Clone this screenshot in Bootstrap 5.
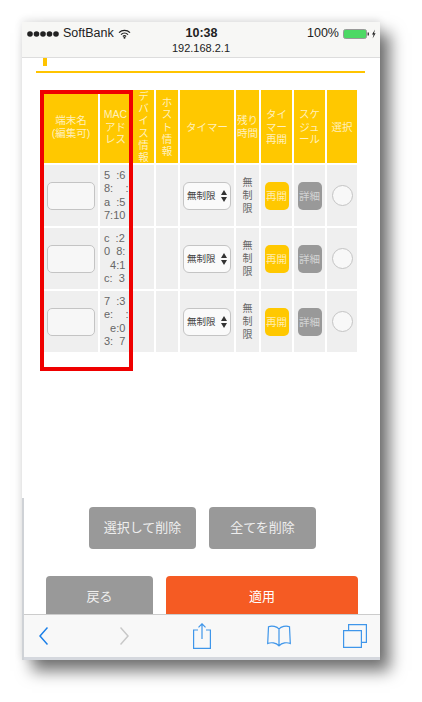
<!DOCTYPE html>
<html lang="ja">
<head>
  <meta charset="UTF-8" />
  <meta name="viewport" content="width=device-width, initial-scale=1" />
  <title>端末一覧</title>
  <link href="https://cdn.jsdelivr.net/npm/bootstrap@5.3.0/dist/css/bootstrap.min.css" rel="stylesheet" />
  <style>
    body {
      font-family: "Liberation Sans", "Noto Sans CJK JP", sans-serif;
      background: #fff;
      width: 422px;
      height: 702px;
      overflow: hidden;
      padding: 22px 0 0 22px;
    }
    .phone {
      width: 358px;
      height: 638px;
      background: #fff;
      box-shadow: 10px 11px 15px rgba(0, 0, 0, .55), 0 -2px 8px rgba(0, 0, 0, .1);
      overflow: hidden;
      position: relative;
    }
    .phone-edge { position: absolute; left: 0; top: 476px; bottom: 0; width: 2px; background: #cfd2d6; z-index: 3; }
    .status-area {
      height: 36px;
      background: #f7f7f5;
      border-bottom: 1px solid #ddd;
      position: relative;
      z-index: 2;
      color: #222;
      font-size: 12.5px;
    }
    .status-row { height: 20px; padding: 3px 4px 0 5px; }
    .status-row > div { flex: 1 1 0; }
    .clock { font-weight: 700; font-size: 12.5px; color: #222; }
    .url { font-size: 11px; line-height: 13px; color: #222; }
    .heading-box { height: 15px; margin: 0 15px 0 14px; border-bottom: 2px solid #ffc400; position: relative; }
    .heading-mark { position: absolute; left: 7px; top: 0; width: 4px; height: 8px; background: #ffc400; }
    .heading-text {
      position: absolute;
      left: 24px;
      top: -21px;
      color: #ffc400;
      font-size: 22px;
      line-height: 24px;
      white-space: nowrap;
    }
    .device-wrap { padding: 15px 0 0 20px; height: 434px; }
    table.device-table {
      width: 317px;
      table-layout: fixed;
      border-collapse: separate;
      border-spacing: 2px;
      margin: 0;
    }
    .device-table th {
      background: #ffc800;
      color: #fff0bd;
      font-weight: 400;
      font-size: 10.5px;
      line-height: 12.2px;
      height: 73px;
      padding: 0 1px;
      text-align: center;
      vertical-align: middle;
      overflow: hidden;
    }
    .device-table td {
      background: #efefef;
      height: 61px;
      padding: 0;
      text-align: center;
      vertical-align: middle;
      color: #666;
      font-size: 10px;
      line-height: 13.3px;
    }
    .w-name { width: 54px; } .w-mac { width: 31px; } .w-info { width: 21px; } .w-host { width: 22px; } .w-timer { width: 54px; }
    .w-left { width: 23px; } .w-re { width: 31px; } .w-sch { width: 31px; } .w-sel { width: 30px; }
    .device-table td.mac { font-size: 11px; line-height: 13.3px; text-align: left; padding-left: 4px; white-space: pre; overflow: hidden; }
    .name-input {
      display: block;
      width: 48px;
      height: 28px;
      margin: 0 auto;
      background: #f7f7f7;
      border: 1.5px solid #c4c4c4;
      border-radius: 5px;
    }
    .timer-pick {
      width: 48px;
      height: 28px;
      margin: 0 auto;
      background: #fafafa;
      border: 1.5px solid #c4c4c4;
      border-radius: 6px;
      font-size: 9.5px;
      color: #444;
      padding: 0 3px 0 3px;
    }
    .tri { display: block; width: 6px; height: 12px; }
    .tiny-btn {
      display: block;
      width: 24px;
      height: 28px;
      line-height: 28px;
      margin: 0 auto;
      border-radius: 5px;
      font-size: 10.5px;
    }
    .tiny-yellow { background: #ffc800; color: #ffedb0; }
    .tiny-grey { background: #999; color: #d4d4d4; }
    .pick-circle {
      display: block;
      width: 21px;
      height: 21px;
      margin: 0 auto;
      background: #f8f8f8;
      border: 1.5px solid #c4c4c4;
      border-radius: 50%;
    }
    .red-mark {
      position: absolute;
      left: 18px;
      top: 68px;
      width: 93px;
      height: 281px;
      border: 4px solid #ef0000;
      z-index: 1;
    }
    .act-btn {
      width: 107px;
      height: 42px;
      background: #999;
      color: #eee;
      font-size: 13px;
      border: 0;
      border-radius: 4px;
      padding: 0;
    }
    .act-row { gap: 13px; padding-left: 67px; }
    .send-row { gap: 13px; padding: 27px 0 0 24px; }
    .act-btn.apply { width: 192px; background: #f55b23; color: #fff; }
    .safari-bar {
      position: absolute;
      left: 0;
      right: 0;
      bottom: 0;
      height: 46px;
      background: #f8f8f8;
      border-top: 1px solid #ccc;
      border-bottom: 3px solid #d5d8de;
      padding: 0 0 0 17px;
      z-index: 2;
    }
    .ico-next { margin-left: 72px; }
    .ico-share { margin-left: 64px; }
    .ico-book { margin-left: 56px; }
    .ico-tabs { margin-left: 52px; }
  </style>
</head>
<body>
  <div class="phone">
    <div class="phone-edge"></div>
    <div class="status-area">
      <div class="status-row d-flex align-items-center">
        <div class="d-flex align-items-center">
          <svg class="me-1" width="32" height="6" viewBox="0 0 32 6" fill="#222"><circle cx="3" cy="3" r="2.800"/><circle cx="9.500" cy="3" r="2.800"/><circle cx="16" cy="3" r="2.800"/><circle cx="22.500" cy="3" r="2.800"/><circle cx="29" cy="3" r="2.800"/></svg>
          <span>SoftBank</span>
          <svg class="ms-1" width="13" height="10" viewBox="0 0 13 10"><path d="M1 3.600a8 8 0 0 1 11 0M3 5.600a5 5 0 0 1 7 0M4.900 7.400a2.400 2.400 0 0 1 3.200 0" fill="none" stroke="#222" stroke-width="1.300"/><circle cx="6.500" cy="8.800" r="1" fill="#222"/></svg>
        </div>
        <div class="clock text-center">10:38</div>
        <div class="d-flex align-items-center justify-content-end">
          <span>100%</span>
          <svg class="ms-1" width="33" height="10" viewBox="0 0 33 10"><rect x=".5" y=".5" width="23" height="9" rx="2" fill="#4cd964" stroke="#999"/><rect x="24.500" y="3.500" width="1.500" height="3" fill="#444"/><path d="M32 .5 29 5.500h1.600L29.600 9.500 32.600 4.200H31z" fill="#222"/></svg>
        </div>
      </div>
      <div class="url text-center">192.168.2.1</div>
    </div>

    <div class="heading-box"><div class="heading-mark"></div><div class="heading-text">SSS1タイマー S</div></div>

    <div class="device-wrap">
      <table class="device-table">
        <colgroup>
          <col class="w-name"><col class="w-mac"><col class="w-info"><col class="w-host"><col class="w-timer"><col class="w-left"><col class="w-re"><col class="w-sch"><col class="w-sel">
        </colgroup>
        <thead>
          <tr>
            <th>端末名<br>(編集可)</th><th>MAC<br>アド<br>レス</th><th>デバイス情報</th><th>ホスト情報</th><th>タイマー</th><th>残り<br>時間</th><th>タイ<br>マー<br>再開</th><th>スケ<br>ジュ<br>ール</th><th>選択</th>
          </tr>
        </thead>
        <tbody id="rows"></tbody>
      </table>
    </div>

    <div class="act-row d-flex">
      <button type="button" class="btn act-btn">選択して削除</button>
      <button type="button" class="btn act-btn">全てを削除</button>
    </div>
    <div class="send-row d-flex">
      <button type="button" class="btn act-btn">戻る</button>
      <button type="button" class="btn act-btn apply">適用</button>
    </div>

    <div class="red-mark"></div>

    <div class="safari-bar d-flex align-items-center">
      <svg width="9" height="18" viewBox="0 0 9 18"><path d="M8.500.5 1 9l7.500 8.500" fill="none" stroke="#1a7fe8" stroke-width="1.500"/></svg>
      <svg class="ico-next" width="9" height="18" viewBox="0 0 9 18"><path d="M.5.500 8 9 .5 17.500" fill="none" stroke="#c8c8c8" stroke-width="1.500"/></svg>
      <svg class="ico-share" width="18" height="26" viewBox="0 0 18 26"><path d="M5 7H.6v18.400h16.800V7H13M9 .8V16M5.500 4.300 9 .8l3.500 3.500" fill="none" stroke="#3f96ea" stroke-width="1.200"/></svg>
      <svg class="ico-book" width="24" height="22" viewBox="0 0 24 22"><path d="M12 4C10 1.500 5 .2 1.500 1.700L.7 18.500C4 17.200 9 17.500 12 20.800 15 17.500 20 17.200 23.300 18.500L22.500 1.700C19 .2 14 1.500 12 4zM12 4v17" fill="none" stroke="#3f96ea" stroke-width="1.200"/></svg>
      <svg class="ico-tabs" width="24" height="24" viewBox="0 0 24 24"><path d="M.6 6.600h17.800v16.800H.6zM5.600 6.600V.6h17.800v17.800h-5" fill="none" stroke="#3f96ea" stroke-width="1.200"/></svg>
    </div>
  </div>

  <script>
    const macs = ["5  :6\n8:    :\na  :5\n7:10", "c  :2\n0  8:\n  4:1\nc:  3", "7  :3\ne:    :\n  e:0\n3:  7"];
    document.getElementById("rows").innerHTML = macs.map(m => `
      <tr>
        <td><span class="name-input"></span></td>
        <td class="mac">${m}</td>
        <td></td><td></td>
        <td><div class="timer-pick d-flex align-items-center justify-content-between"><span>無制限</span>
          <svg class="tri" viewBox="0 0 6 12"><path d="M3 0 6 5H0zM3 12 0 7h6z" fill="#333"/></svg></div></td>
        <td>無<br>制<br>限</td>
        <td><span class="tiny-btn tiny-yellow">再開</span></td>
        <td><span class="tiny-btn tiny-grey">詳細</span></td>
        <td><span class="pick-circle"></span></td>
      </tr>`).join("");
  </script>
  <script src="https://cdn.jsdelivr.net/npm/bootstrap@5.3.0/dist/js/bootstrap.bundle.min.js"></script>
</body>
</html>
